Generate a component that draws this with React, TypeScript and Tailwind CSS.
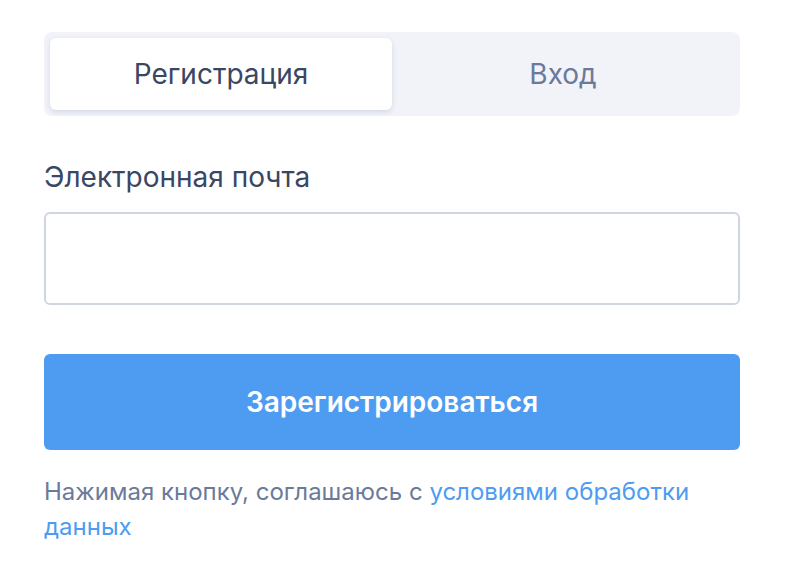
import { useState } from 'react'

const App = () => {
  const [tab, setTab] = useState<'signup' | 'login'>('signup')
  const [email, setEmail] = useState('')

  return (
    <div className="min-h-screen bg-white font-['Inter','Noto_Sans',sans-serif]">
      <div className="w-[696px] ml-[44px] pt-[32px]">
        {/* Tabs */}
        <div className="h-[84px] p-[6px] rounded-[8px] bg-[#f1f3f8] grid grid-cols-2">
          <button
            onClick={() => setTab('signup')}
            className={`rounded-[6px] text-[28px] ${
              tab === 'signup'
                ? 'bg-white text-[#3a4664] shadow-[0_2px_5px_rgba(140,150,190,0.3)]'
                : 'text-[#6b7a9a]'
            }`}
          >
            Регистрация
          </button>
          <button
            onClick={() => setTab('login')}
            className={`rounded-[6px] text-[28px] ${
              tab === 'login'
                ? 'bg-white text-[#3a4664] shadow-[0_2px_5px_rgba(140,150,190,0.3)]'
                : 'text-[#6b7a9a]'
            }`}
          >
            Вход
          </button>
        </div>

        {/* Email */}
        <label htmlFor="email" className="block mt-[43px] text-[28px] leading-[36px] text-[#3a4664]">
          Электронная почта
        </label>
        <input
          id="email"
          type="email"
          value={email}
          onChange={(e) => setEmail(e.target.value)}
          className="mt-[17px] block w-full h-[93px] px-5 rounded-[6px] border-2 border-[#cfd6e2] text-[26px] text-[#3a4664] outline-none"
        />

        <button className="mt-[49px] w-full h-[96px] rounded-[6px] bg-[#4d9cf1] text-white text-[28px] font-semibold">
          Зарегистрироваться
        </button>

        <p className="mt-[24px] text-[24px] leading-[35px] text-[#6b7a9a]">
          Нажимая кнопку, соглашаюсь с{' '}
          <a href="#" className="text-[#4d9cf1]">
            условиями обработки данных
          </a>
        </p>
      </div>
    </div>
  )
}

export default App
